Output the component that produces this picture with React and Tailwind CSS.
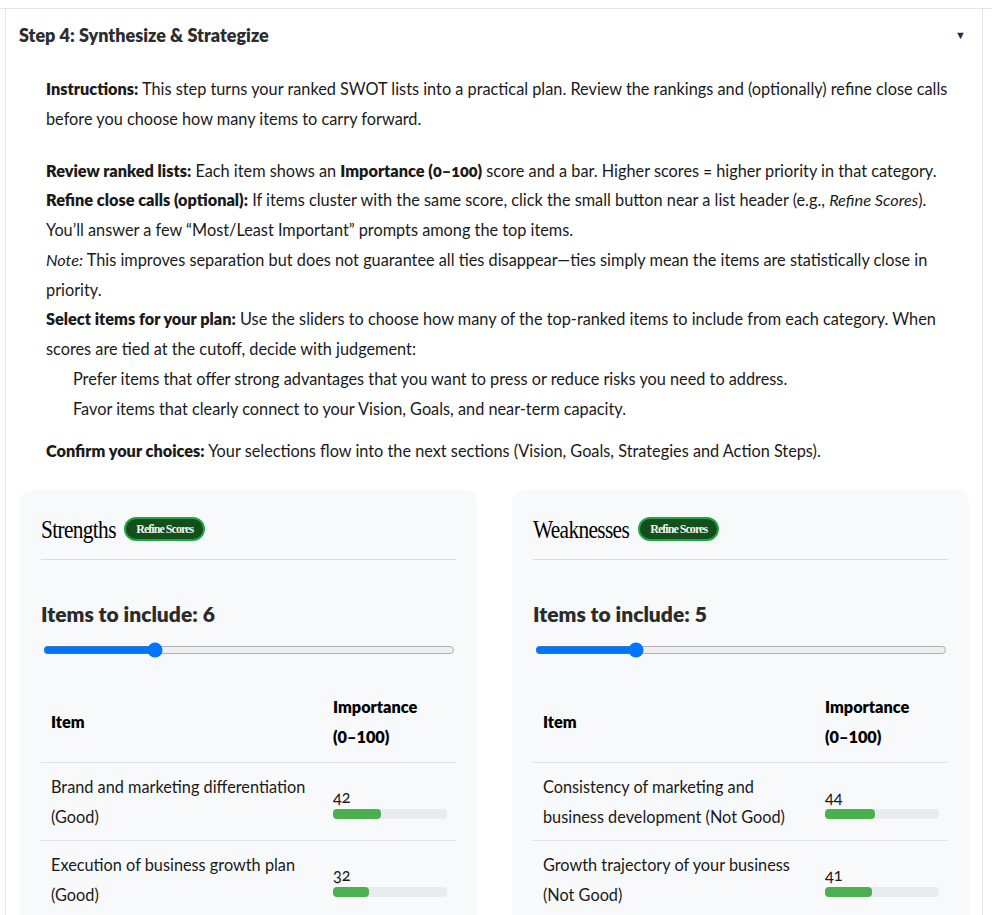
import React from 'react';

const categories = [
    {
        title: 'Strengths',
        trim: '-mr-[17px]',
        count: 6,
        min: 1,
        max: 20,
        items: [
            { name: 'Brand and marketing differentiation (Good)', score: 42 },
            { name: 'Execution of business growth plan (Good)', score: 32 },
        ],
    },
    {
        title: 'Weaknesses',
        trim: '-mr-[21px]',
        count: 5,
        min: 1,
        max: 18,
        items: [
            { name: 'Consistency of marketing and business development (Not Good)', score: 44 },
            { name: 'Growth trajectory of your business (Not Good)', score: 41 },
        ],
    },
];

const CategoryCard = ({ category }) => {
    const { title, trim, count, min, max, items } = category;

    return (
        <div className="rounded-xl bg-[#f8f9fa] px-[21px] pt-[19px] pb-6">
            {/* Header */}
            <div className="box-content flex h-[40px] items-center gap-[9px] border-b border-[#dcdcdc] pb-[10px]">
                <h3 className={`inline-block origin-left scale-x-[0.82] font-['Liberation_Serif',serif] text-[26px] font-normal tracking-[-0.03em] text-black ${trim}`}>
                    {title}
                </h3>
                <button className="flex h-[24px] items-center rounded-full border-2 border-[#22a447] bg-[#134e1b] px-[10px] font-['Liberation_Serif',serif] text-[12px] font-bold tracking-[-0.08em] text-[#eef7ee]">
                    Refine Scores
                </button>
            </div>

            {/* Slider */}
            <p className="mt-[40px] text-[21px] font-extrabold leading-[28px] text-[#2b2b2b]">
                Items to include: {count}
            </p>
            <input
                type="range"
                min={min}
                max={max}
                defaultValue={count}
                className="m-0 mt-[14px] ml-[2px] block h-4 w-[412px]"
            />

            {/* Ranked table */}
            <table className="mt-[24px] w-full table-fixed border-collapse text-[16.3px] leading-[30px]">
                <colgroup>
                    <col className="w-[282px]" />
                    <col />
                </colgroup>
                <thead>
                    <tr className="border-b border-[#dee2e6]">
                        <th className="px-[10px] py-[10px] text-left align-middle font-extrabold text-black">Item</th>
                        <th className="px-[10px] py-[10px] text-left align-middle font-extrabold text-black">
                            Importance <span className="whitespace-nowrap">(0–100)</span>
                        </th>
                    </tr>
                </thead>
                <tbody>
                    {items.map((item, i) => (
                        <tr key={i} className="border-b border-[#dee2e6]">
                            <td className="px-[10px] pt-[9px] pb-[8px] align-middle text-[#1a1a1a]">{item.name}</td>
                            <td className="pl-[10px] pr-[9px] align-middle">
                                <div className="pt-[2px] leading-[20px] text-[#1a1a1a] oldstyle-nums">{item.score}</div>
                                <div className="mt-[2px] h-[10px] w-full rounded bg-[#e9ecef]">
                                    <div className="h-full rounded bg-[#4caf50]" style={{ width: `${item.score}%` }} />
                                </div>
                            </td>
                        </tr>
                    ))}
                </tbody>
            </table>
        </div>
    );
};

export default function App() {
    return (
        <div className="min-h-screen bg-white pt-2 font-['Lato',sans-serif] text-[#1a1a1a]">
            <div className="border-t border-[#e4e4e4]">
                <div className="ml-[5px] w-[978px] border-x border-[#e4e4e4]">
                    {/* Summary */}
                    <div className="flex h-[52px] items-center justify-between pl-[13px] pr-[16px]">
                        <h2 className="text-[18px] font-extrabold text-[#2d2d2d]">Step 4: Synthesize &amp; Strategize</h2>
                        <span className="text-[11px] text-[#2d2d2d]">▼</span>
                    </div>

                    {/* Instructions */}
                    <div className="pt-[13px] pl-[40px] pr-[20px] text-[16.3px] leading-[29.75px] oldstyle-nums [&_strong]:font-extrabold">
                        <p className="mb-[22px]">
                            <strong>Instructions:</strong> This step turns your ranked SWOT lists into a practical plan. Review the rankings and (optionally) refine close calls before you choose how many items to carry forward.
                        </p>
                        <div>
                            <p>
                                <strong>Review ranked lists:</strong> Each item shows an <strong>Importance (0–100)</strong> score and a bar. Higher scores = higher priority in that category.
                            </p>
                            <p>
                                <strong>Refine close calls (optional):</strong> If items cluster with the same score, click the small button near a list header (e.g., <em>Refine Scores</em>). You’ll answer a few “Most/Least Important” prompts among the top items.
                            </p>
                            <p>
                                <em>Note:</em> This improves separation but does not guarantee all ties disappear—ties simply mean the items are statistically close in priority.
                            </p>
                            <p>
                                <strong>Select items for your plan:</strong> Use the sliders to choose how many of the top-ranked items to include from each category. When scores are tied at the cutoff, decide with judgement:
                            </p>
                            <ul className="pl-[27px]">
                                <li>Prefer items that offer strong advantages that you want to press or reduce risks you need to address.</li>
                                <li>Favor items that clearly connect to your Vision, Goals, and near-term capacity.</li>
                            </ul>
                        </div>
                        <p className="mt-[13px]">
                            <strong>Confirm your choices:</strong> Your selections flow into the next sections (Vision, Goals, Strategies and Action Steps).
                        </p>
                    </div>

                    {/* Category cards */}
                    <div className="mt-[24px] ml-[14px] grid w-[949px] grid-cols-2 gap-[35px]">
                        {categories.map((category) => (
                            <CategoryCard key={category.title} category={category} />
                        ))}
                    </div>
                </div>
            </div>
        </div>
    );
}
